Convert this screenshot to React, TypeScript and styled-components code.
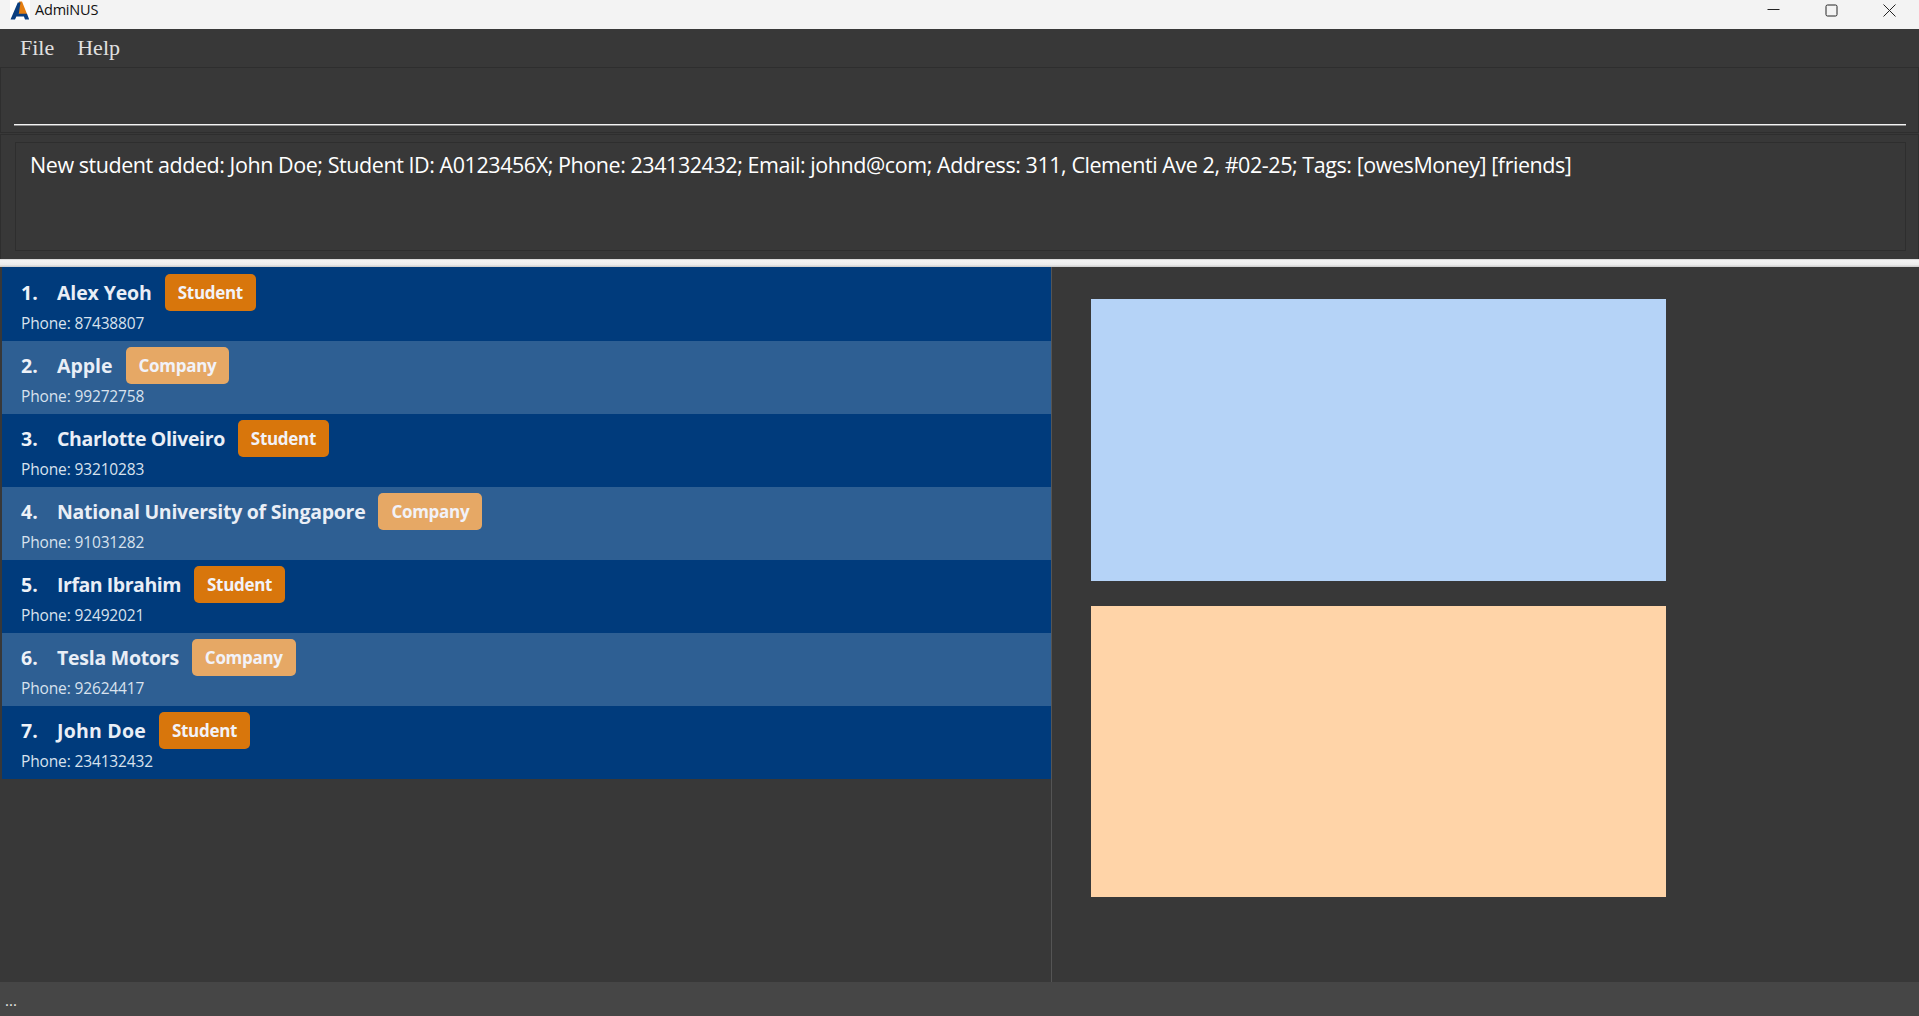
import React from "react";
import styled, { createGlobalStyle } from "styled-components";

const Global = createGlobalStyle`
  html, body { margin: 0; padding: 0; background: #383838; }
  * { box-sizing: border-box; }
`;

const Win = styled.div`
  width: 1919px;
  height: 1016px;
  display: flex;
  flex-direction: column;
  overflow: hidden;
  background: #383838;
  font-family: "Open Sans", "Noto Sans", sans-serif;
`;

const TitleBar = styled.div`
  height: 29px;
  flex: none;
  background: #f3f3f3;
  display: flex;
  align-items: flex-start;
  padding-left: 10px;
  color: #111;
`;

const TitleText = styled.span`
  font-size: 14.5px;
  line-height: 20px;
  letter-spacing: -0.2px;
  margin-left: 5px;
`;

const WinControls = styled.div`
  margin-left: auto;
  display: flex;
  align-items: flex-start;
  padding: 4px 23px 0 0;
  gap: 45px;
`;

const MenuBar = styled.div`
  height: 38px;
  flex: none;
  display: flex;
  align-items: center;
  padding-left: 20px;
  gap: 23px;
  background: #383838;
`;

const MenuItem = styled.span`
  font-family: "Liberation Serif", serif;
  font-size: 22px;
  color: #e0e0e0;
`;

const CommandPane = styled.div`
  height: 66px;
  flex: none;
  border: 1px solid #2e2e2e;
  padding: 0 12px 6px 13px;
  display: flex;
  flex-direction: column;
  justify-content: flex-end;
`;

const CommandLine = styled.div`
  height: 2px;
  background: linear-gradient(#f4f4f4 60%, #8c8c8c 60%);
`;

const ResultPane = styled.div`
  height: 125px;
  flex: none;
  margin-top: 1px;
  border: 1px solid #2e2e2e;
  border-bottom: none;
  padding: 7px 12px 8px 14px;
  display: flex;
`;

const ResultBox = styled.div`
  flex: 1;
  border: 1px solid #2e2e2e;
  padding: 7px 14px;
  color: #fff;
  font-size: 21.5px;
  line-height: 30px;
  letter-spacing: -0.44px;
  white-space: nowrap;
`;

const Divider = styled.div`
  height: 8px;
  flex: none;
  background: linear-gradient(#cfcfcf 0, #f4f4f4 20%, #ececec 70%, #c9c9c9 100%);
`;

const Main = styled.div`
  flex: 1;
  display: flex;
  min-height: 0;
`;

const ListCol = styled.div`
  width: 1051px;
  flex: none;
  padding-left: 2px;
`;

const Row = styled.div<{ $alt: boolean }>`
  height: 73px;
  background: ${(p) => (p.$alt ? "#2e5f93" : "#003b7c")};
  padding: 6px 0 0 19px;

  &:first-child {
    height: 74px;
    padding-top: 7px;
  }
`;

const NameLine = styled.div`
  display: flex;
  align-items: center;
  height: 37px;
`;

const Index = styled.span`
  width: 36px;
  flex: none;
  font-size: 19.5px;
  font-weight: 700;
  color: #eef2f8;
`;

const Name = styled.span<{ $track: number }>`
  font-size: 19.5px;
  font-weight: 700;
  letter-spacing: ${(p) => p.$track}px;
  color: #e9eef6;
  white-space: nowrap;
`;

const Tag = styled.span<{ $company: boolean }>`
  margin-left: 13px;
  height: 37px;
  padding: 0 13px;
  display: flex;
  align-items: center;
  border-radius: 5px;
  background: ${(p) => (p.$company ? "#e6a865" : "#d8760c")};
  color: #f2f2f8;
  font-size: 17px;
  font-weight: 700;
  letter-spacing: -0.3px;
`;

const Phone = styled.div`
  margin-top: 2px;
  font-size: 15.5px;
  line-height: 21px;
  letter-spacing: -0.14px;
  color: #d8e2ee;
`;

const Side = styled.div`
  flex: 1;
  border-left: 1px solid #555;
  padding: 32px 0 0 39px;
  display: flex;
  flex-direction: column;
  gap: 25px;
`;

const Block = styled.div<{ $color: string; $h: number }>`
  width: 575px;
  height: ${(p) => p.$h}px;
  background: ${(p) => p.$color};
`;

const StatusBar = styled.div`
  height: 34px;
  flex: none;
  background: #464646;
  color: #e8e8e8;
  font-size: 15px;
  padding: 8px 0 0 5px;
  line-height: 20px;
`;

const rows = [
  { name: "Alex Yeoh", tag: "Student", phone: "87438807", track: -0.12 },
  { name: "Apple", tag: "Company", phone: "99272758", track: -0.01 },
  { name: "Charlotte Oliveiro", tag: "Student", phone: "93210283", track: -0.36 },
  { name: "National University of Singapore", tag: "Company", phone: "91031282", track: -0.26 },
  { name: "Irfan Ibrahim", tag: "Student", phone: "92492021", track: -0.45 },
  { name: "Tesla Motors", tag: "Company", phone: "92624417", track: -0.25 },
  { name: "John Doe", tag: "Student", phone: "234132432", track: 0.21 },
];

const Logo = () => (
  <svg width="20" height="20" viewBox="0 0 20 20">
    <rect width="20" height="20" fill="#fff" />
    <path d="M9 1.5 L12 1.5 L17 14 H8.5 Z" fill="#e57f12" />
    <path d="M0.5 19.5 L7.8 2.5 H10.5 L8.8 13.8 H17 L19.2 19.5 H15 L13.9 16.5 H6.4 L5 19.5 Z" fill="#0b3f80" />
  </svg>
);

export default function App() {
  return (
    <Win>
      <Global />
      <TitleBar>
        <Logo />
        <TitleText>AdmiNUS</TitleText>
        <WinControls>
          <svg width="13" height="13" viewBox="0 0 13 13"><path d="M0.5 5.5H12.5" stroke="#222" strokeWidth="1" /></svg>
          <svg width="13" height="13" viewBox="0 0 13 13"><rect x="1" y="1" width="11" height="11" rx="1.5" fill="none" stroke="#222" strokeWidth="1" /></svg>
          <svg width="13" height="13" viewBox="0 0 13 13"><path d="M0.5 0.5L12.5 12.5M12.5 0.5L0.5 12.5" stroke="#222" strokeWidth="1" /></svg>
        </WinControls>
      </TitleBar>
      <MenuBar>
        <MenuItem>File</MenuItem>
        <MenuItem>Help</MenuItem>
      </MenuBar>
      <CommandPane>
        <CommandLine />
      </CommandPane>
      <ResultPane>
        <ResultBox>
          New student added: John Doe; Student ID: A0123456X; Phone: 234132432; Email: johnd@com; Address: 311, Clementi Ave 2, #02-25; Tags: [owesMoney] [friends]
        </ResultBox>
      </ResultPane>
      <Divider />
      <Main>
        <ListCol>
          {rows.map((r, i) => (
            <Row key={r.name} $alt={i % 2 === 1}>
              <NameLine>
                <Index>{i + 1}.</Index>
                <Name $track={r.track}>{r.name}</Name>
                <Tag $company={r.tag === "Company"}>{r.tag}</Tag>
              </NameLine>
              <Phone>Phone: {r.phone}</Phone>
            </Row>
          ))}
        </ListCol>
        <Side>
          <Block $color="#b5d3f7" $h={282} />
          <Block $color="#ffd4a8" $h={291} />
        </Side>
      </Main>
      <StatusBar>...</StatusBar>
    </Win>
  );
}
